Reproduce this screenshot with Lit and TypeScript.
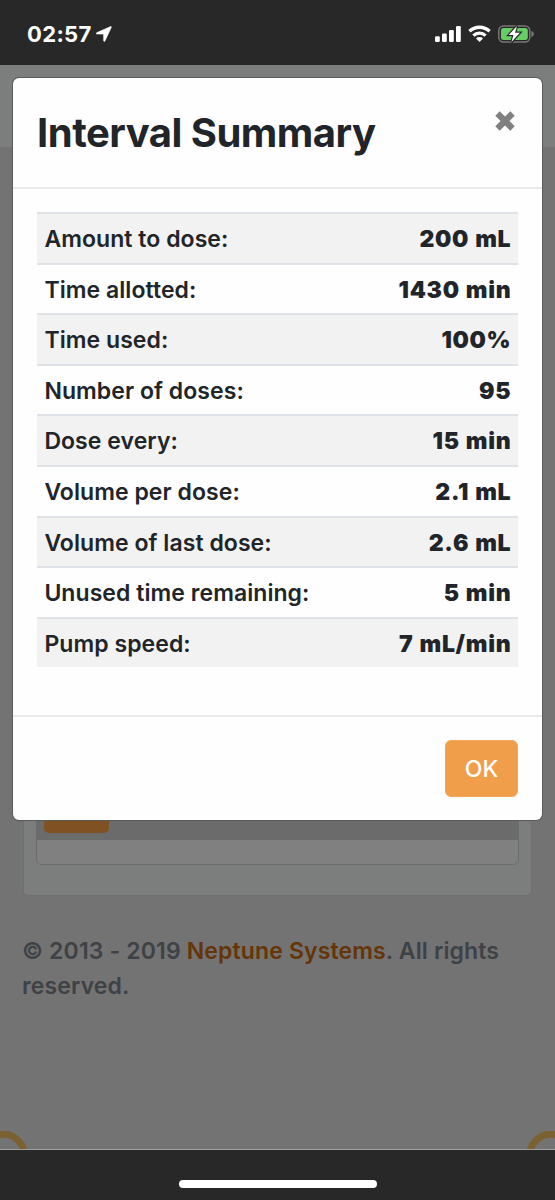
import { LitElement, html, css, svg } from "lit";
import { customElement } from "lit/decorators.js";

interface Row {
  label: string;
  value: string;
}

const ROWS: Row[] = [
  { label: "Amount to dose:", value: "200 mL" },
  { label: "Time allotted:", value: "1430 min" },
  { label: "Time used:", value: "100%" },
  { label: "Number of doses:", value: "95" },
  { label: "Dose every:", value: "15 min" },
  { label: "Volume per dose:", value: "2.1 mL" },
  { label: "Volume of last dose:", value: "2.6 mL" },
  { label: "Unused time remaining:", value: "5 min" },
  { label: "Pump speed:", value: "7 mL/min" },
];

@customElement("status-bar")
class StatusBar extends LitElement {
  static styles = css`
    :host {
      display: flex;
      align-items: center;
      height: 65px;
      box-sizing: border-box;
      padding: 3px 21px 0 27px;
      background: #282828;
      color: #fff;
    }
    .time {
      font-size: 22px;
      font-weight: 700;
      line-height: 28px;
      letter-spacing: 0.35px;
    }
    .arrow { margin-left: 4px; }
    .icons { margin-left: auto; display: flex; align-items: center; }
    svg { display: block; }
    .wifi { margin: 0 7px 0 6px; }
  `;
  render() {
    return html`
      <span class="time">02:57</span>
      <svg class="arrow" width="16" height="16" viewBox="0 0 16 16">
        <path d="M14.6.6.6 6.8c-.7.4-.5 1.2.3 1.2l6.7.1.1 6.7c0 .8.9 1 1.2.3L15.3 1.3c.2-.5-.2-.9-.7-.7z" fill="#fff" stroke="#fff" stroke-width=".6" />
      </svg>
      <div class="icons">
        <svg width="27" height="18" viewBox="0 0 27 18" fill="#fff">
          <rect x="0" y="11.2" width="4.8" height="5.8" rx="1.2" />
          <rect x="7" y="8.4" width="4.8" height="8.6" rx="1.2" />
          <rect x="14" y="5" width="4.8" height="12" rx="1.2" />
          <rect x="21" y="1" width="4.8" height="16" rx="1.2" />
        </svg>
        <svg class="wifi" width="23" height="18" viewBox="0 0 23 18" fill="none" stroke="#fff" stroke-width="3.3">
          <path d="M1.4 6.3a14.6 14.6 0 0 1 20.2 0" />
          <path d="M5.4 10.6a8.8 8.8 0 0 1 12.2 0" />
          <path d="M11.5 17 8 13.5a4.9 4.9 0 0 1 7 0z" fill="#fff" stroke="none" />
        </svg>
        <svg width="36" height="18" viewBox="0 0 36 18">
          <rect x=".8" y=".9" width="31" height="16.2" rx="4.8" fill="none" stroke="#777" stroke-width="1.5" />
          <path d="M33.4 6c1.8.6 2.4 1.6 2.4 3s-.6 2.4-2.4 3z" fill="#777" />
          <rect x="3" y="3.1" width="26.8" height="11.8" rx="2.6" fill="#65cf65" />
          <path d="M18.9.9 10.7 10h4.8L13.4 17.1l8.6-9.3h-4.9z" fill="#fff" stroke="#282828" stroke-width="2.4" paint-order="stroke" />
        </svg>
      </div>
    `;
  }
}

@customElement("interval-dialog")
class IntervalDialog extends LitElement {
  static styles = css`
    :host {
      display: flex;
      flex-direction: column;
      box-sizing: border-box;
      background: #fefefe;
      border-radius: 6px;
      box-shadow: 0 0 0 1px #5a5a5a;
      color: #212529;
    }
    .header {
      display: flex;
      justify-content: space-between;
      box-sizing: border-box;
      height: 111px;
      padding: 29px 27px 0 24px;
      border-bottom: 2px solid #e8e8ed;
    }
    .title {
      margin: 0;
      font-size: 40px;
      line-height: 52px;
      font-weight: 700;
      letter-spacing: -0.5px;
      white-space: nowrap;
    }
    .close { margin-top: 4px; display: block; }
    .body { height: 526px; box-sizing: border-box; padding: 23px 24px 0; }
    .row {
      display: flex;
      justify-content: space-between;
      box-sizing: border-box;
      height: 50.62px;
      padding: 1px 7.2px 0 7.4px;
      border-top: 2px solid #dfe2e6;
      font-size: 23px;
      line-height: 48.4px;
      white-space: nowrap;
    }
    .row:nth-child(odd) { background: #f2f2f2; }
    .label { font-weight: 600; letter-spacing: 0.06px; }
    .value { font-weight: 900; letter-spacing: 0.7px; word-spacing: 0.8px; margin-right: -0.5px; }
    .footer {
      display: flex;
      justify-content: flex-end;
      flex: 1;
      padding: 23px 24px 0;
      border-top: 2px solid #e8e8ed;
    }
    .ok {
      width: 73px;
      height: 57px;
      padding: 0;
      border: 1px solid #f2a85c;
      border-radius: 6px;
      background: #f09e4a;
      color: #fff;
      font: 500 23px Inter, sans-serif;
    }
  `;
  render() {
    return html`
      <div class="header">
        <h1 class="title">Interval Summary</h1>
        <svg class="close" width="20" height="20" viewBox="0 0 20 20">
          <path d="M2.5 2.5 17.5 17.5M17.5 2.5 2.5 17.5" stroke="#808080" stroke-width="6.2" />
        </svg>
      </div>
      <div class="body">
        ${ROWS.map(
          (r) => html`<div class="row"><span class="label">${r.label}</span><span class="value">${r.value}</span></div>`
        )}
      </div>
      <div class="footer"><button class="ok">OK</button></div>
    `;
  }
}

@customElement("app-root")
class AppRoot extends LitElement {
  static styles = css`
    :host {
      display: flex;
      flex-direction: column;
      height: 1200px;
      font-family: Inter, sans-serif;
      background: #737373;
    }
    .page {
      position: relative;
      display: flex;
      flex-direction: column;
      height: 1084px;
      overflow: hidden;
    }
    .nav { height: 82px; background: #7b7e7c; }
    .card {
      box-sizing: border-box;
      height: 749px;
      margin: 0 23px;
      padding: 0 12px;
      border: 1px solid #6e706f;
      border-radius: 0 0 5px 5px;
      background: #7b7e7c;
    }
    .panel {
      box-sizing: border-box;
      height: 717px;
      border: 1px solid #6c6c6c;
      border-radius: 0 0 6px 6px;
      background: #808080;
      overflow: hidden;
    }
    .tools {
      display: flex;
      align-items: flex-end;
      box-sizing: border-box;
      height: 691px;
      padding: 0 7px 7px;
      background: #6b6b6b;
    }
    .action { width: 65px; height: 57px; border-radius: 5px; background: #805223; }
    .copy {
      margin: 38px 22px 0;
      font-size: 23px;
      line-height: 35px;
      font-weight: 600;
      letter-spacing: 0.14px;
      color: #3e4247;
    }
    .link { color: #653508; }
    .rings {
      display: flex;
      justify-content: space-between;
      margin: auto -23px 0 -22px;
      height: 18px;
    }
    .home {
      display: flex;
      justify-content: center;
      flex: 1;
      box-sizing: border-box;
      padding: 30px 0 0 1px;
      background: #282828;
      border-top: 1px solid #a0a0a0;
    }
    .pill { width: 198px; height: 8px; border-radius: 4px; background: #fff; }
    .modal { position: absolute; top: 13px; left: 13px; width: 529px; height: 742px; }
  `;
  ring() {
    return svg`<svg width="52" height="18" viewBox="0 0 52 18"><circle cx="25" cy="25" r="21.7" fill="none" stroke="#7b6031" stroke-width="7"/></svg>`;
  }
  render() {
    return html`
      <status-bar></status-bar>
      <div class="page">
        <div class="nav"></div>
        <div class="card">
          <div class="panel"><div class="tools"><div class="action"></div></div></div>
        </div>
        <div class="copy">© 2013 - 2019 <span class="link">Neptune Systems</span>. All rights reserved.</div>
        <div class="rings">${this.ring()}${this.ring()}</div>
        <interval-dialog class="modal"></interval-dialog>
      </div>
      <div class="home"><div class="pill"></div></div>
    `;
  }
}
